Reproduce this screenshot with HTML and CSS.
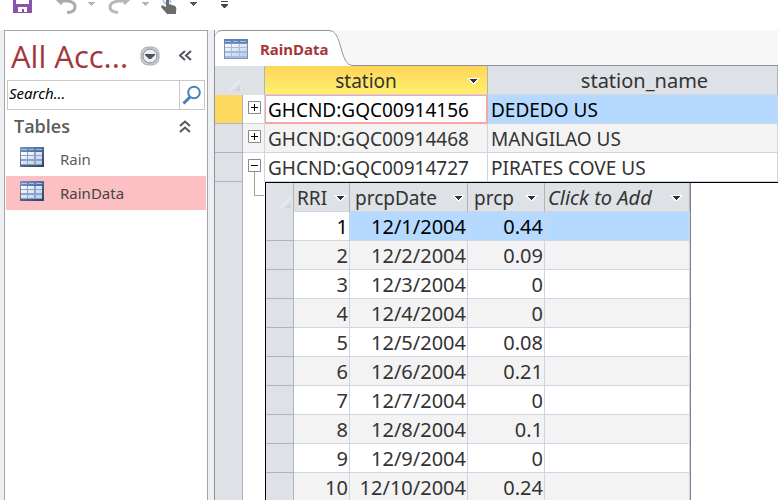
FILE: index.html
```
<!DOCTYPE html>
<html lang="en">
<head>
<meta charset="utf-8">
<title>RainData</title>
<link rel="stylesheet" href="styles.css">
</head>
<body>
<svg class="defs" aria-hidden="true">
  <defs>
    <linearGradient id="cell" x2="1" y2="1"><stop offset="0" stop-color="#fff"/><stop offset="1" stop-color="#b4cdf2"/></linearGradient>
    <linearGradient id="head" x2="1"><stop offset="0" stop-color="#7290c4"/><stop offset="1" stop-color="#4a6cab"/></linearGradient>
    <linearGradient id="frame" x2="1" y2="1"><stop offset="0" stop-color="#8293b0"/><stop offset="1" stop-color="#2b415f"/></linearGradient>
    <linearGradient id="corner" x2="1" y2="1"><stop offset=".4" stop-color="#eef4fb"/><stop offset="1" stop-color="#c3cdd9"/></linearGradient>
    <symbol id="grid-icon" viewBox="0 0 24 20">
      <path fill="url(#frame)" d="M0 0h24v20H0z"/>
      <path fill="url(#head)" d="M0 0h23v4H0z"/>
      <path fill="#a9bddf" d="M1 2h6v1H1zM9 2h5v1H9zM16 2h6v1h-6z"/>
      <path fill="#8da2c4" d="M1 5h21v13H1z"/>
      <path fill="url(#cell)" d="M1 5h6v3H1zM8 5h6v3H8zM16 5h6v3h-6zM1 9h6v3H1zM8 9h6v3H8zM16 9h6v3h-6zM1 14h6v3H1zM8 14h6v3H8zM16 14h6v3h-6z"/>
    </symbol>
    <symbol id="tab-icon" viewBox="0 0 24 20">
      <path fill="#7e91b3" d="M0 0h24v20H0z"/>
      <path fill="#5f80bd" d="M0 0h24v4H0z"/>
      <path fill="#a9bddf" d="M1 2h6v1H1zM9 2h5v1H9zM16 2h6v1h-6z"/>
      <path fill="#a9bbd8" d="M1 5h22v14H1z"/>
      <path fill="url(#cell)" d="M1 5h6v3H1zM8 5h7v3H8zM16 5h7v3h-7zM1 9h6v3H1zM8 9h7v3H8zM16 9h7v3h-7zM1 14h6v3H1zM8 14h7v3H8zM16 14h7v3h-7z"/>
    </symbol>
    <symbol id="arrow" viewBox="0 0 13 8">
      <path fill="#fff" d="M0 1h13v1h-2v2h-1v1H9v1H8v1H5V6H4V5H3V4H2V2H0z"/>
      <path fill="#2b3039" d="M3 2h7v1H9v1H8v1H7v1H6V5H5V4H4V3H3z"/>
    </symbol>
    <symbol id="triangle" viewBox="0 0 7 4"><path fill="currentColor" d="M0 0h7v1H6v1H5v1H4v1H3V3H2V2H1V1H0z"/></symbol>
    <symbol id="select-all" viewBox="0 0 12 12"><path fill="url(#corner)" d="M12 0v12H0z"/></symbol>
  </defs>
</svg>

<header class="toolbar">
  <button class="tool save" aria-label="Save"><svg width="19" height="13" viewBox="0 0 19 13"><path fill="#8855ab" d="M0 0h3v4h13V0h3v13H0z"/><path fill="#fff" d="M5 7h9v5h-3V9H9v3H5z"/></svg></button>
  <button class="tool undo" aria-label="Undo"><svg width="23" height="14" viewBox="0 0 23 14"><g fill="none" stroke="#ababab" stroke-width="3"><path d="M1 -2l6 6"/><path d="M4 1h9q7 1 7 5.500q0 6-8 6"/></g></svg></button>
  <button class="tool drop light" aria-label="Undo list"><svg width="7" height="4"><use href="#triangle"/></svg></button>
  <button class="tool redo" aria-label="Redo"><svg width="23" height="14" viewBox="0 0 23 14"><g fill="none" stroke="#b8b8b8" stroke-width="3"><path d="M22 -2l-6 6"/><path d="M18 1h-7Q2 2 2 7q0 5 8 5.500"/></g></svg></button>
  <button class="tool drop light" aria-label="Redo list"><svg width="7" height="4"><use href="#triangle"/></svg></button>
  <button class="tool touch" aria-label="Touch mode"><svg width="16" height="14" viewBox="0 0 16 14"><path fill="none" stroke="#a9cdf0" stroke-width="2" d="M2 0q1 3 3 4M9 0q0 2 1 3"/><path fill="#6c6c6c" d="M5 0h3v4l6 2q2 1 1 6v2H6L0 7l1-2 4 2z"/></svg></button>
  <button class="tool drop" aria-label="Touch mode list"><svg width="7" height="4"><use href="#triangle"/></svg></button>
  <button class="tool more" aria-label="Customize toolbar"><svg width="7" height="7" viewBox="0 0 7 7"><path fill="#444" d="M0 0h7v1H0zM0 3h7v1L4 7H3L0 4z"/></svg></button>
</header>

<div class="workspace">
  <nav class="nav">
    <div class="nav-head">
      <h1>All Acc...</h1>
      <button class="round" aria-label="Choose category"><svg width="20" height="20" viewBox="0 0 20 20"><rect x="1" y="1" width="18" height="18" rx="7" fill="#c9cdd2" stroke="#a5abb3"/><circle cx="10" cy="10" r="7" fill="#eceef1" stroke="#868d96"/><path fill="#50505c" d="M5 8h10v1l-4 4H9L5 9z"/></svg></button>
      <button class="chev" aria-label="Collapse pane"><svg width="13" height="13" viewBox="0 0 13 13"><path fill="none" stroke="#555560" stroke-width="2" d="M6 2L1 6.500L6 11M12 2L7 6.500L12 11"/></svg></button>
    </div>
    <form class="search">
      <input type="text" placeholder="Search..." aria-label="Search">
      <button type="button" aria-label="Search"><svg width="20" height="20" viewBox="0 0 20 20"><circle cx="12" cy="7.500" r="5.800" fill="none" stroke="#4a80b8" stroke-width="2"/><path stroke="#4a80b8" stroke-width="3" d="M8 12l-6.500 6.500"/></svg></button>
    </form>
    <div class="group">
      <h2>Tables</h2>
      <button class="chev" aria-label="Collapse Tables"><svg width="12" height="13" viewBox="0 0 12 13"><path fill="none" stroke="#555560" stroke-width="2" d="M1 6L6 1.500L11 6M1 12L6 7.500L11 12"/></svg></button>
    </div>
    <a class="item" href="#rain"><svg width="24" height="20"><use href="#grid-icon"/></svg>Rain</a>
    <a class="item selected" href="#raindata"><svg width="24" height="20"><use href="#grid-icon"/></svg>RainData</a>
  </nav>

  <main class="document">
    <div class="tabs">
      <button class="tab"><svg width="24" height="20"><use href="#tab-icon"/></svg>RainData</button>
      <svg class="curve" width="24" height="36" viewBox="0 0 24 36"><path fill="#fff" d="M0 1C14 1 11 35 24 35.500V36H0z"/><path fill="none" stroke="#8d939b" d="M0 .5C14 .5 10 35.500 24 35.500"/></svg>
      <span class="tab-space"></span>
    </div>
    <table class="sheet outer">
      <colgroup><col class="c-sel"><col class="c-exp"><col class="c-station"><col></colgroup>
      <thead>
        <tr>
          <th class="all" colspan="2"><svg width="12" height="12"><use href="#select-all"/></svg></th>
          <th class="active"><div class="label"><span>station</span><button aria-label="Filter station"><svg width="13" height="8"><use href="#arrow"/></svg></button></div></th>
          <th class="name">station_name</th>
        </tr>
      </thead>
      <tbody>
        <tr class="current"><td class="sel"></td><td class="exp"><button aria-label="Expand"><svg width="13" height="13" viewBox="0 0 13 13"><path fill="#fff" stroke="#8a8a8a" d="M.5.5h12v12H.5z"/><path stroke="#000" d="M3 6.500h7M6.500 3v7"/></svg></button></td><td class="focus">GHCND:GQC00914156</td><td>DEDEDO US</td></tr>
        <tr class="alt"><td class="sel"></td><td class="exp"><button aria-label="Expand"><svg width="13" height="13" viewBox="0 0 13 13"><path fill="#fff" stroke="#8a8a8a" d="M.5.5h12v12H.5z"/><path stroke="#000" d="M3 6.500h7M6.500 3v7"/></svg></button></td><td>GHCND:GQC00914468</td><td>MANGILAO US</td></tr>
        <tr class="open"><td class="sel"></td><td class="exp"><button aria-label="Collapse"><svg width="13" height="13" viewBox="0 0 13 13"><path fill="#fff" stroke="#8a8a8a" d="M.5.5h12v12H.5z"/><path stroke="#000" d="M3 6.500h7"/></svg></button></td><td>GHCND:GQC00914727</td><td>PIRATES COVE US</td></tr>
        <tr class="detail">
          <td class="sel"></td>
          <td class="link"><svg width="21" height="14" viewBox="0 0 21 14"><path fill="none" stroke="#a0a0a0" d="M11.500 0v13.500H21"/></svg></td>
          <td class="nest" colspan="2">
            <table class="sheet inner">
              <colgroup><col class="c-sel"><col class="c-id"><col class="c-date"><col class="c-prcp"><col class="c-add"></colgroup>
              <thead>
                <tr>
                  <th class="all"><svg width="12" height="12"><use href="#select-all"/></svg></th>
                  <th><div class="label"><span>RRI</span><button aria-label="Filter"><svg width="13" height="8"><use href="#arrow"/></svg></button></div></th>
                  <th><div class="label"><span>prcpDate</span><button aria-label="Filter prcpDate"><svg width="13" height="8"><use href="#arrow"/></svg></button></div></th>
                  <th><div class="label"><span>prcp</span><button aria-label="Filter prcp"><svg width="13" height="8"><use href="#arrow"/></svg></button></div></th>
                  <th class="add"><div class="label"><span>Click to Add</span><button aria-label="Add column"><svg width="13" height="8"><use href="#arrow"/></svg></button></div></th>
                </tr>
              </thead>
              <tbody>
                <tr class="current"><td class="sel"></td><td class="plain">1</td><td>12/1/2004</td><td>0.44</td><td></td></tr>
                <tr class="alt"><td class="sel"></td><td>2</td><td>12/2/2004</td><td>0.09</td><td></td></tr>
                <tr><td class="sel"></td><td>3</td><td>12/3/2004</td><td>0</td><td></td></tr>
                <tr class="alt"><td class="sel"></td><td>4</td><td>12/4/2004</td><td>0</td><td></td></tr>
                <tr><td class="sel"></td><td>5</td><td>12/5/2004</td><td>0.08</td><td></td></tr>
                <tr class="alt"><td class="sel"></td><td>6</td><td>12/6/2004</td><td>0.21</td><td></td></tr>
                <tr><td class="sel"></td><td>7</td><td>12/7/2004</td><td>0</td><td></td></tr>
                <tr class="alt"><td class="sel"></td><td>8</td><td>12/8/2004</td><td>0.1</td><td></td></tr>
                <tr><td class="sel"></td><td>9</td><td>12/9/2004</td><td>0</td><td></td></tr>
                <tr class="alt"><td class="sel"></td><td>10</td><td>12/10/2004</td><td>0.24</td><td></td></tr>
              </tbody>
            </table>
          </td>
        </tr>
      </tbody>
    </table>
  </main>
</div>
</body>
</html>
```
FILE: styles.css
```
* { box-sizing: border-box; }
body {
  margin: 0;
  height: 100vh;
  display: flex;
  flex-direction: column;
  overflow: hidden;
  background: #fff;
  color: #333;
  font-family: "Noto Sans", "Open Sans", sans-serif;
}
button {
  border: 0;
  padding: 0;
  background: none;
  color: inherit;
  font: inherit;
  display: block;
}
svg { display: block; flex: none; }
.defs { position: absolute; width: 0; height: 0; }

.toolbar {
  flex: none;
  display: flex;
  align-items: flex-start;
  height: 30px;
  padding-left: 13px;
}
.tool { color: #555; }
.drop { padding-top: 2px; }
.light { color: #b5b5b5; }
.undo { margin-left: 23px; }
.undo + .drop { margin-left: 10px; }
.redo { margin-left: 13px; }
.redo + .drop { margin-left: 11px; }
.touch { margin-left: 12px; }
.touch + .drop { margin-left: 13px; }
.more { margin-left: 24px; padding-top: 1px; }

.workspace {
  flex: 1;
  min-height: 0;
  display: flex;
  background: #eeeff2;
  padding-left: 4px;
}
.nav {
  flex: none;
  width: 204px;
  border: 1px solid #a0a5ae;
  border-bottom: 0;
  background: #fff;
  padding: 0 1px;
}
.nav-head {
  display: flex;
  align-items: center;
  height: 49px;
  padding-left: 5px;
}
.nav-head h1 {
  margin: 0;
  width: 129px;
  color: #a4373a;
  font: 400 31px/44px "Open Sans", sans-serif;
}
.nav-head .chev { margin-left: 19px; }
.search {
  display: flex;
  height: 30px;
  margin: 0 1px;
  border: 1px solid #c9c9c9;
}
.search input {
  flex: 1;
  min-width: 0;
  border: 0;
  padding: 0 1px 4px;
  background: none;
  font: italic 15px "Noto Sans", sans-serif;
}
.search input::placeholder { color: #000; opacity: 1; }
.search button {
  width: 25px;
  padding-left: 2px;
  border-left: 1px solid #c9c9c9;
}
.group {
  display: flex;
  align-items: center;
  justify-content: space-between;
  height: 32px;
  padding: 0 15px 0 8px;
}
.group h2 {
  margin: 0;
  color: #5c5c5c;
  font: 600 18px/24px "Open Sans", sans-serif;
}
.item {
  display: flex;
  align-items: center;
  gap: 16px;
  height: 34px;
  padding-left: 14px;
  color: #5c5c5c;
  font-size: 15px;
  line-height: 20px;
  text-decoration: none;
}
.item svg { margin-bottom: 4px; }
.selected { background: #fcc0c2; color: #444; }

.document {
  flex: 1;
  min-width: 0;
  margin-left: 6px;
  border-left: 1px solid #8d939b;
  background: #fff;
}
.tabs {
  display: flex;
  height: 36px;
  background: #f7f7f7;
}
.tab {
  display: flex;
  align-items: center;
  gap: 12px;
  padding-left: 9px;
  border-top: 1px solid #8d939b;
  border-radius: 7px 0 0 0;
  background: #fff;
  color: #a4373a;
  font: 700 15px/20px "Noto Sans", sans-serif;
}
.tab-space { flex: 1; border-bottom: 1px solid #8d939b; }

.sheet {
  border-collapse: separate;
  border-spacing: 0;
  table-layout: fixed;
  font-size: 19px;
  line-height: 26px;
}
.outer { width: 100%; }
.inner { width: 425px; border-right: 1px solid #7c828c; }
.inner tbody { font-size: 20px; }
.c-sel { width: 28px; }
.c-exp { width: 22px; }
.c-station { width: 223px; }
.c-id { width: 56px; }
.c-date { width: 118px; }
.c-prcp { width: 77px; }
.c-add { width: 145px; }

th, td {
  height: 29px;
  padding: 2px 2px 0 3px;
  border-right: 1px solid #cdd5e3;
  border-bottom: 1px solid #cdd5e3;
  overflow: hidden;
  white-space: nowrap;
}
th {
  background: #dee1e6;
  border-right-color: #aeb4bd;
  font-weight: 400;
}
th.name { padding-left: 26px; font-size: 20px; }
th.active { background: linear-gradient(#ffd557, #fff06f); padding: 2px 0 0; }
.all { border-bottom-color: #dee1e6; }
.outer .all { padding-right: 24px; }
.all svg { margin: 8px 0 0 auto; }
.label { display: flex; align-items: center; }
.label span { flex: 1; text-align: center; }
.label button { flex: none; }
.active .label { padding-right: 7px; }
.active .label span { padding-left: 0; }
.current td { background: #b5d9ff; color: #000; }
.alt td { background: #f3f3f3; }
.current .exp, .current .plain { background: #fff; }
.sheet .sel { background: #dee1e6; border-color: #aeb4bd; }
.outer > tbody > .current > .sel { background: #ffd860; }
.sheet .focus { background: #fff; box-shadow: inset 0 0 0 1px #f9a5a8; border-color: #f9a5a8; }
.exp { padding: 0 0 4px 5px; line-height: 0; }
.open .exp {
  border-bottom: 0;
  background: linear-gradient(#a0a0a0, #a0a0a0) 11px 100% / 1px 10px no-repeat;
}
.detail td { vertical-align: top; }
.detail > .link { padding: 0; border-bottom: 0; border-right: 0; }
.detail > .nest {
  padding: 0;
  border: solid #000;
  border-width: 1px 0 0 1px;
}
.inner td { text-align: right; padding-right: 1px; }
.inner th { padding: 2px 6px 0 3px; }
.inner .all { padding-right: 2px; }
.inner .label span { text-align: left; }
.inner th:nth-child(2) { padding-right: 2px; }
.inner th:nth-child(3) { padding-left: 5px; padding-right: 2px; }
.inner th:nth-child(4) { padding-left: 6px; }
.inner .add { font-style: italic; font-size: 20px; }
```
